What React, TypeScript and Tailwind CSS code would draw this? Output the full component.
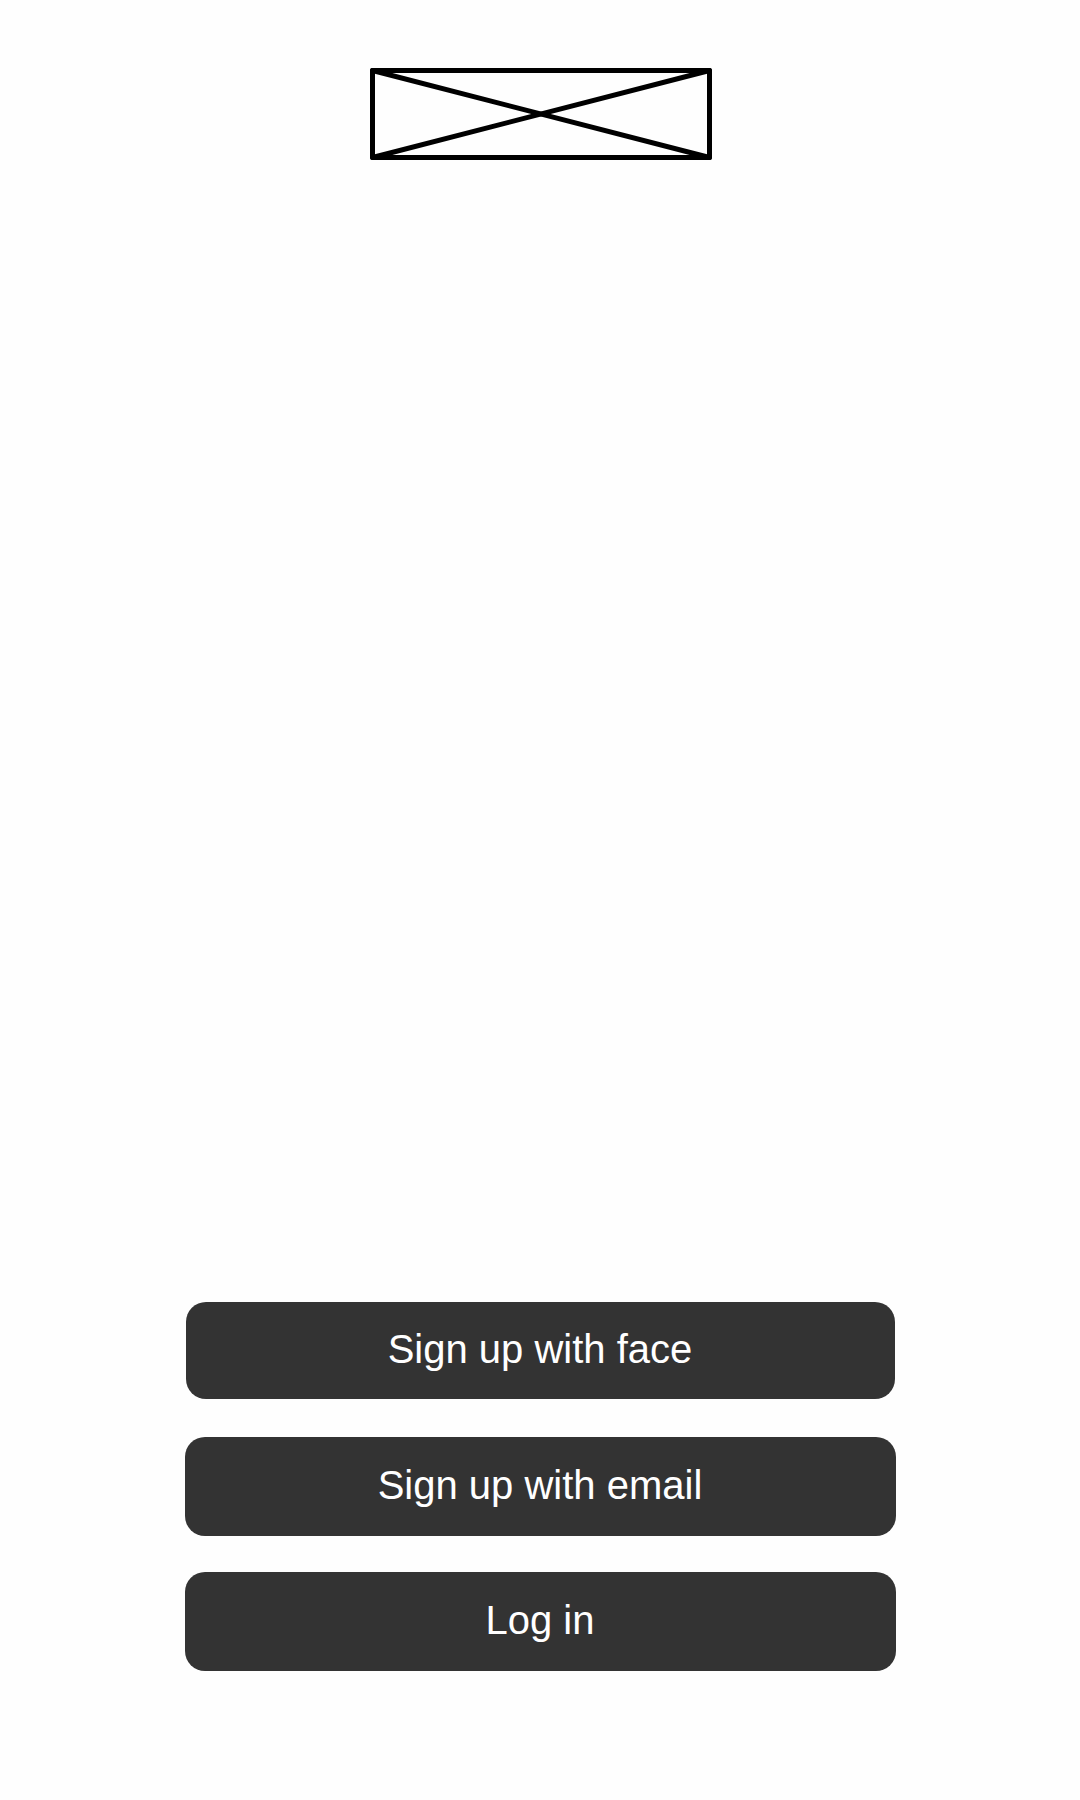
const buttons = [
  { label: "Sign up with face", size: "w-[709px] h-[97px]", gap: "" },
  { label: "Sign up with email", size: "w-[711px] h-[99px]", gap: "mt-[38px]" },
  { label: "Log in", size: "w-[711px] h-[99px]", gap: "mt-[36px]" },
];

function LogoPlaceholder() {
  return (
    <svg width="342" height="92" viewBox="0 0 342 92" fill="none">
      <g stroke="#000" strokeWidth="5" strokeLinecap="round" strokeLinejoin="round">
        <rect x="2.5" y="2.5" width="337" height="87" />
        <line x1="2.5" y1="2.5" x2="339.5" y2="89.5" />
        <line x1="2.5" y1="89.5" x2="339.5" y2="2.5" />
      </g>
    </svg>
  );
}

export default function App() {
  return (
    <div
      className="min-h-[1800px] w-full bg-[#fefefe] flex flex-col items-center"
      style={{ fontFamily: '"Liberation Sans", Arial, sans-serif' }}
    >
      {/* Logo */}
      <div className="mt-[68px] ml-[1px]">
        <LogoPlaceholder />
      </div>

      {/* Actions */}
      <div className="mt-[1142px] flex flex-col items-center">
        {buttons.map((b) => (
          <button
            key={b.label}
            className={`${b.size} ${b.gap} rounded-[20px] bg-[#333333] text-white text-[40px] leading-none pb-[3px] flex items-center justify-center`}
          >
            {b.label}
          </button>
        ))}
      </div>
    </div>
  );
}
